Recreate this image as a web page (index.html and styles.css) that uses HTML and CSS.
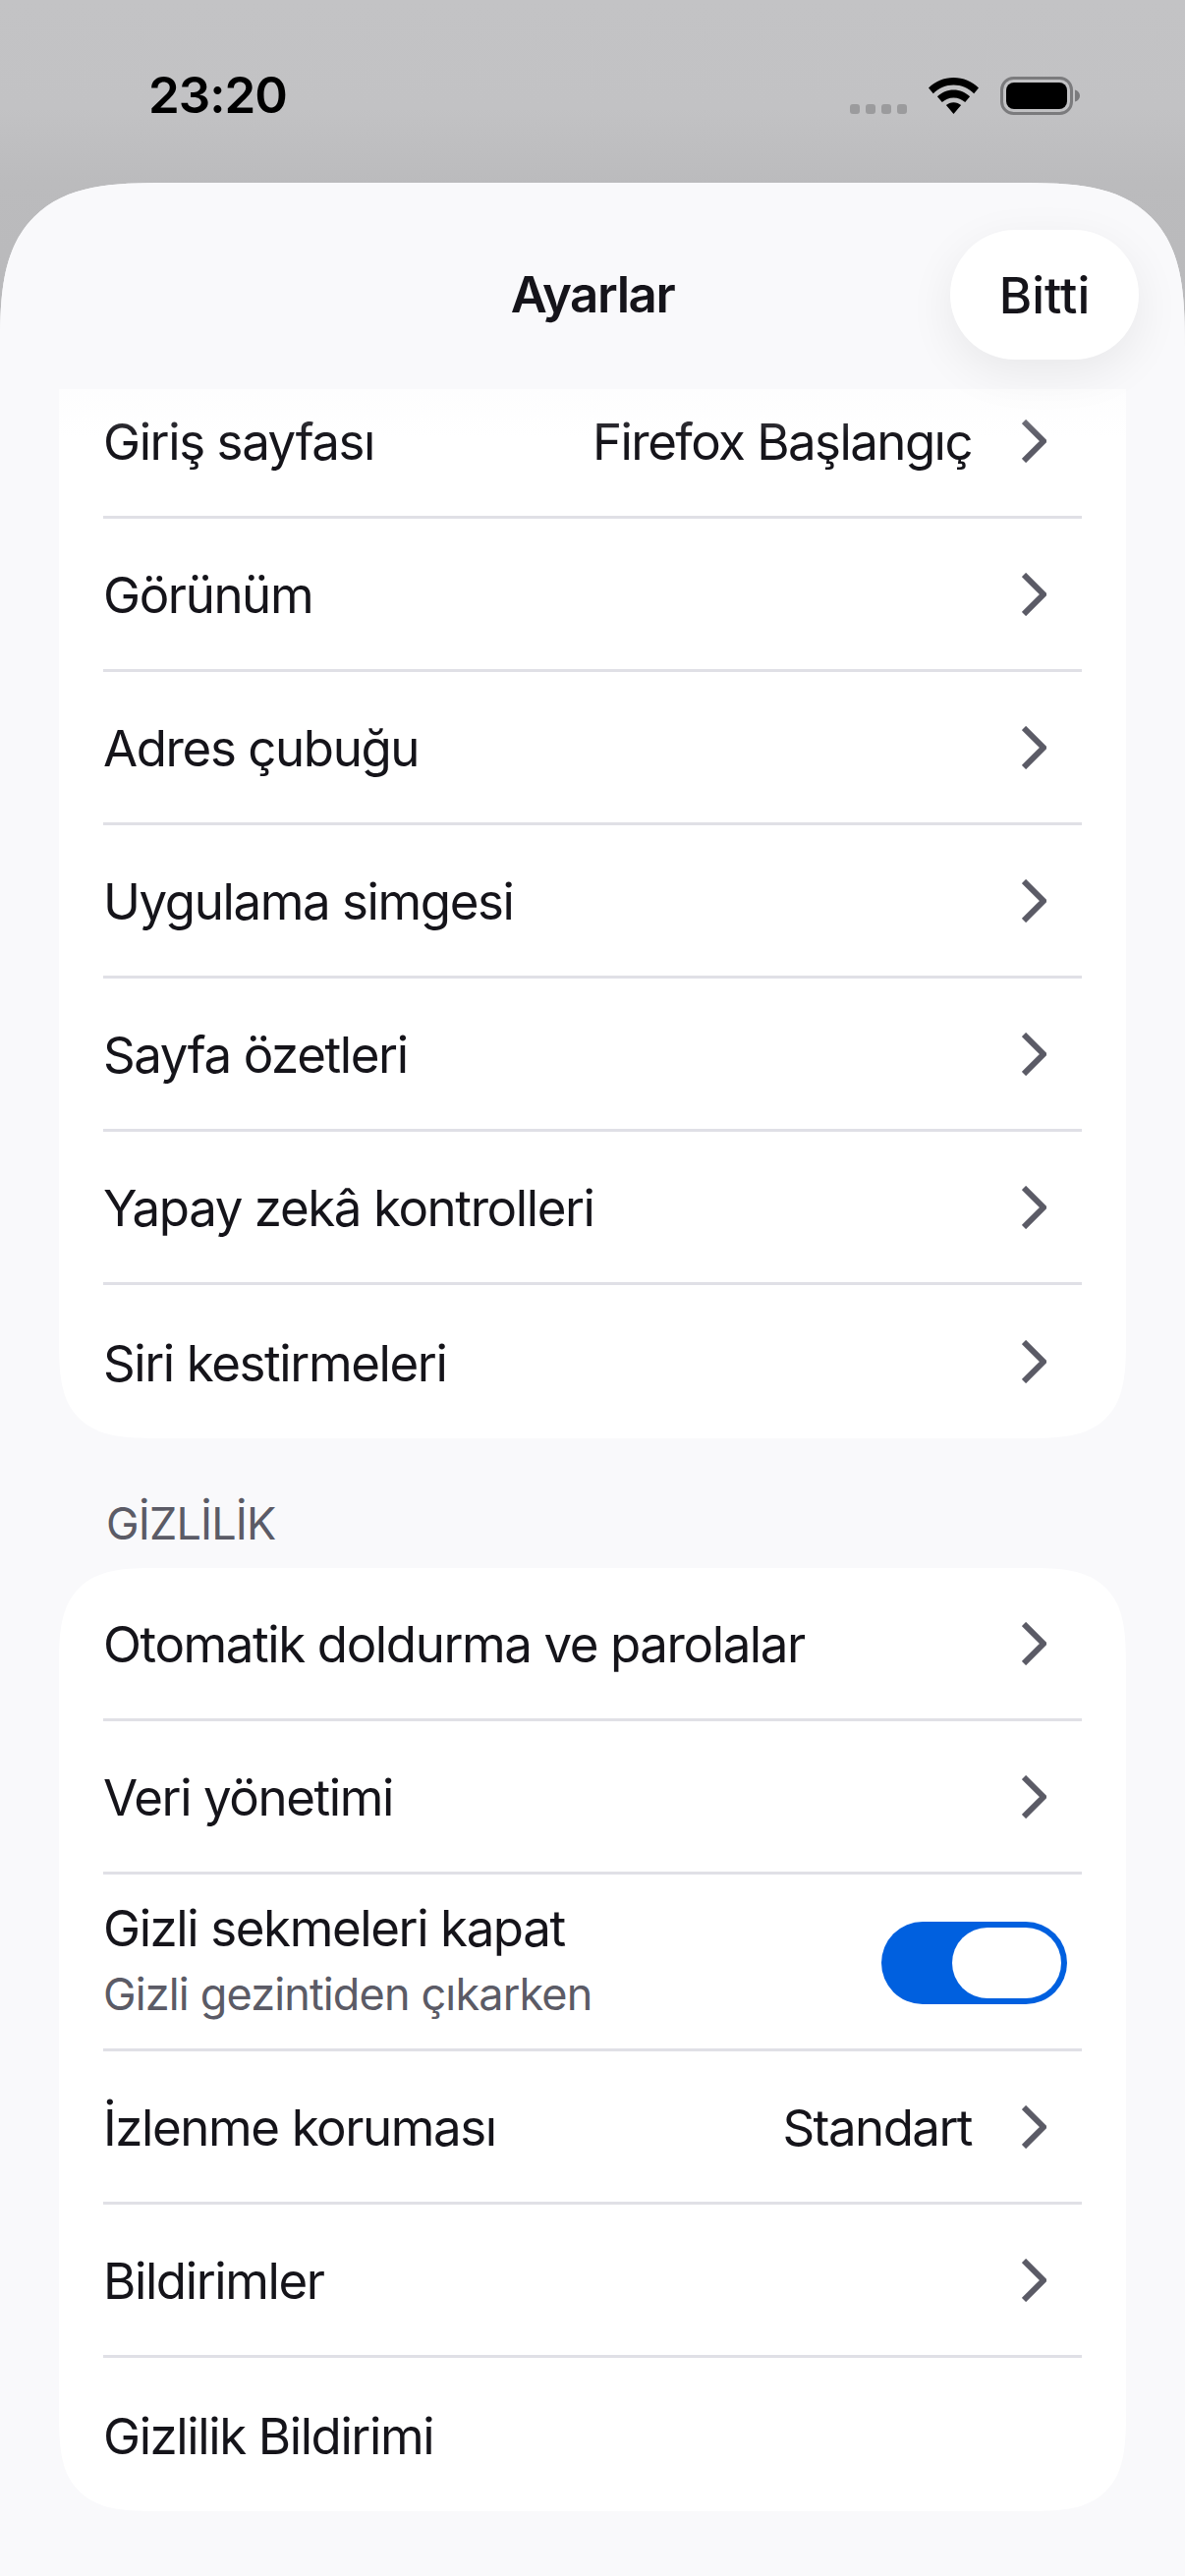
FILE: index.html
```html
<!DOCTYPE html>
<html lang="tr">
<head>
<meta charset="utf-8">
<title>Ayarlar</title>
<link rel="stylesheet" href="styles.css">
</head>
<body>
<div class="screen">
  <div class="status">
    <span class="time">23:20</span>
    <div class="status-icons">
      <div class="dots"><i></i><i></i><i></i><i></i></div>
      <svg class="wifi" width="51" height="37" viewBox="0 0 51 37"><path d="M25.5 0C15.5 0 7 3.800 0 10.500l4.800 5.700C10.400 10.800 17.500 7.600 25.500 7.600s15.100 3.200 20.700 8.600l4.800-5.700C44 3.800 35.500 0 25.500 0z"/><path d="M25.500 12.600c-6.400 0-12 2.500-16.600 6.700l4.900 5.800c3.200-2.900 7.200-4.600 11.700-4.600s8.500 1.700 11.700 4.600l4.900-5.800c-4.600-4.200-10.200-6.700-16.600-6.700z"/><path d="M25.500 25.200c-3 0-5.600 1.100-7.600 2.900L25.500 37l7.600-8.900c-2-1.800-4.600-2.900-7.600-2.900z"/></svg>
      <svg class="battery" width="82" height="39" viewBox="0 0 82 39"><rect x="1.500" y="1.500" width="71" height="36" rx="12" fill="none" stroke="#7b7b7d" stroke-width="3"/><rect x="6" y="6" width="62" height="27" rx="8"/><path d="M76 13.500c3 .8 5 3 5 6s-2 5.200-5 6z" fill="#7b7b7d"/></svg>
    </div>
  </div>

  <div class="sheet">
    <header class="sheet-head">
      <h1 class="sheet-title">Ayarlar</h1>
      <button class="done">Bitti</button>
    </header>
    <div class="head-fade"></div>

    <div class="content">
      <section class="card scrolled">
        <div class="row"><span class="label">Giriş sayfası</span><span class="value">Firefox Başlangıç</span><svg class="chev" width="25" height="44" viewBox="0 0 25 44"><path d="M2 2l20 20L2 42"/></svg></div>
        <div class="row"><span class="label">Görünüm</span><svg class="chev" width="25" height="44" viewBox="0 0 25 44"><path d="M2 2l20 20L2 42"/></svg></div>
        <div class="row"><span class="label">Adres çubuğu</span><svg class="chev" width="25" height="44" viewBox="0 0 25 44"><path d="M2 2l20 20L2 42"/></svg></div>
        <div class="row"><span class="label">Uygulama simgesi</span><svg class="chev" width="25" height="44" viewBox="0 0 25 44"><path d="M2 2l20 20L2 42"/></svg></div>
        <div class="row"><span class="label">Sayfa özetleri</span><svg class="chev" width="25" height="44" viewBox="0 0 25 44"><path d="M2 2l20 20L2 42"/></svg></div>
        <div class="row"><span class="label">Yapay zekâ kontrolleri</span><svg class="chev" width="25" height="44" viewBox="0 0 25 44"><path d="M2 2l20 20L2 42"/></svg></div>
        <div class="row"><span class="label">Siri kestirmeleri</span><svg class="chev" width="25" height="44" viewBox="0 0 25 44"><path d="M2 2l20 20L2 42"/></svg></div>
      </section>

      <h2 class="section-title">GİZLİLİK</h2>

      <section class="card">
        <div class="row"><span class="label">Otomatik doldurma ve parolalar</span><svg class="chev" width="25" height="44" viewBox="0 0 25 44"><path d="M2 2l20 20L2 42"/></svg></div>
        <div class="row"><span class="label">Veri yönetimi</span><svg class="chev" width="25" height="44" viewBox="0 0 25 44"><path d="M2 2l20 20L2 42"/></svg></div>
        <div class="row tall">
          <div class="stack"><span class="title">Gizli sekmeleri kapat</span><span class="sub">Gizli gezintiden çıkarken</span></div>
          <div class="toggle"><div class="thumb"></div></div>
        </div>
        <div class="row"><span class="label">İzlenme koruması</span><span class="value">Standart</span><svg class="chev" width="25" height="44" viewBox="0 0 25 44"><path d="M2 2l20 20L2 42"/></svg></div>
        <div class="row"><span class="label">Bildirimler</span><svg class="chev" width="25" height="44" viewBox="0 0 25 44"><path d="M2 2l20 20L2 42"/></svg></div>
        <div class="row"><span class="label">Gizlilik Bildirimi</span></div>
      </section>
    </div>
  </div>
</div>
</body>
</html>
```
FILE: styles.css
```css
* { box-sizing: border-box; }
html, body { margin: 0; padding: 0; }
body {
  width: 1206px;
  height: 2622px;
  overflow: hidden;
  font-family: Inter, "Noto Sans", sans-serif;
  color: #15141a;
}
.screen {
  width: 1206px;
  height: 2622px;
  display: flex;
  flex-direction: column;
  background: linear-gradient(#c3c3c5 0, #c2c2c4 110px, #bbbbbd 186px, #b9b9bb 330px);
}
.status {
  height: 186px;
  flex: none;
  display: flex;
  justify-content: space-between;
  padding: 66px 106px 0 151px;
}
.time {
  font-size: 51px;
  font-weight: 600;
  line-height: 62px;
  color: #000;
  letter-spacing: -1px;
}
.status-icons {
  display: flex;
  align-items: flex-start;
  padding-top: 12px;
}
.dots {
  display: flex;
  gap: 6px;
  margin: 28px 22px 0 0;
}
.dots i {
  width: 10px;
  height: 10px;
  border-radius: 3px;
  background: #9b9b9d;
}
.wifi { margin: 1px 22px 0 0; }
.sheet {
  flex: 1;
  position: relative;
  background: #f9f9fb;
  border-radius: 170px 170px 0 0;
  corner-shape: superellipse(1.6);
  overflow: hidden;
}
.sheet-head {
  position: absolute;
  z-index: 2;
  left: 0;
  top: 0;
  right: 0;
  height: 210px;
  background: #f9f9fb;
}
.head-fade {
  position: absolute;
  z-index: 1;
  left: 0;
  right: 0;
  top: 210px;
  height: 50px;
  background: linear-gradient(rgba(249, 249, 251, 0.35), rgba(249, 249, 251, 0));
}
.sheet-title {
  margin: 0;
  position: absolute;
  left: 0;
  right: 0;
  top: 48px;
  line-height: 132px;
  text-align: center;
  font-size: 51px;
  font-weight: 600;
  letter-spacing: -1.4px;
  color: #15141a;
}
.done {
  position: absolute;
  left: 967px;
  top: 48px;
  width: 192px;
  height: 132px;
  border: 0;
  border-radius: 66px;
  background: #fff;
  box-shadow: 0 14px 48px rgba(0, 0, 0, 0.07);
  font: 500 51px Inter, sans-serif;
  letter-spacing: 0;
  color: #15141a;
  padding: 0;
}
.content {
  padding: 186px 60px 0;
}
.card {
  background: #fff;
  border-radius: 100px;
  corner-shape: superellipse(1.6);
  padding: 0 45px;
}
.card.scrolled {
  border-top-left-radius: 0;
  border-top-right-radius: 0;
}
.row {
  height: 156px;
  border-bottom: 3px solid #e0e0e6;
  display: flex;
  align-items: center;
  font-size: 51px;
  line-height: 62px;
}
.row:last-child { border-bottom: 0; }
.row.tall { height: 180px; }
.label {
  flex: 1;
  padding-top: 3px;
  letter-spacing: -1.4px;
}
.value {
  color: #15141a;
  padding-top: 3px;
  letter-spacing: -1.55px;
  margin-right: 51px;
}
.chev {
  margin-right: 36px;
  flex: none;
}
.chev path {
  fill: none;
  stroke: #5b5b66;
  stroke-width: 6;
}
.stack {
  flex: 1;
  display: flex;
  flex-direction: column;
  gap: 9px;
  margin-top: -4px;
}
.title { letter-spacing: -1.4px; }
.sub {
  font-size: 45px;
  line-height: 54px;
  color: #5b5b66;
  letter-spacing: -0.85px;
}
.toggle {
  width: 189px;
  height: 84px;
  border-radius: 42px;
  background: #0060df;
  margin: 3px 15px 0 0;
  padding: 6px;
  display: flex;
  justify-content: flex-end;
}
.thumb {
  width: 111px;
  height: 72px;
  border-radius: 36px;
  background: #fff;
}
.section-title {
  margin: 0;
  height: 132px;
  padding: 60px 0 0 48px;
  font-size: 45px;
  line-height: 54px;
  font-weight: 400;
  letter-spacing: -0.85px;
  color: #5b5b66;
}
```
